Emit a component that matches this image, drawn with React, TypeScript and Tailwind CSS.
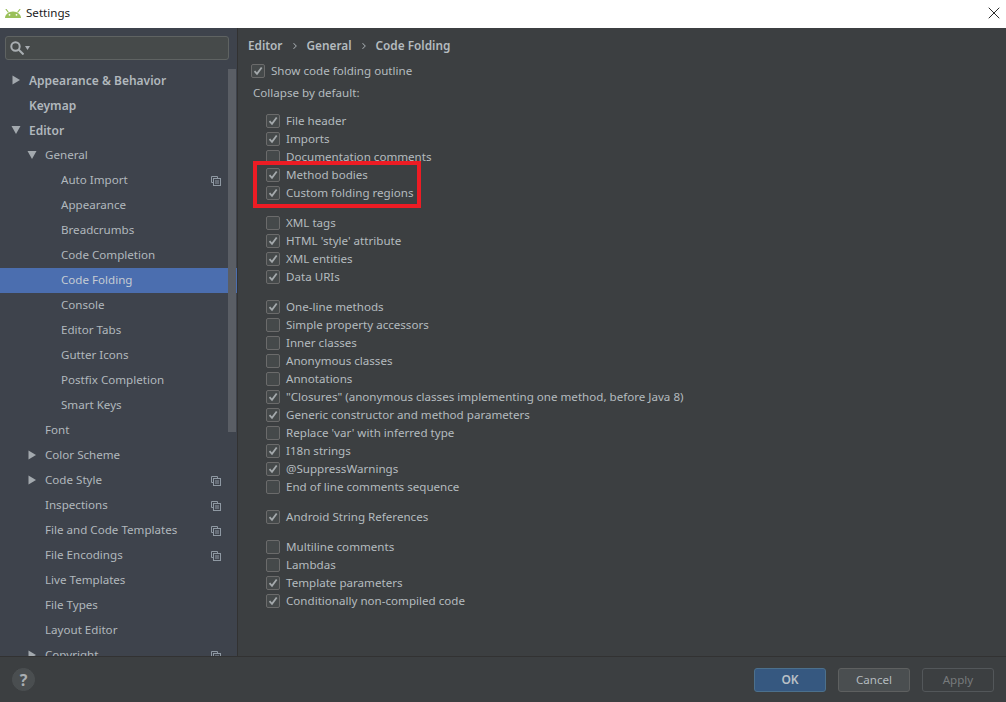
import React from 'react';
import { ChevronRight, X } from 'lucide-react';

const font = "font-['Noto_Sans','Open_Sans',sans-serif]";

interface TreeItem {
  label: string;
  depth: number;
  arrow?: 'right' | 'down';
  bold?: boolean;
  copy?: boolean;
  selected?: boolean;
}

const tree: TreeItem[] = [
  { label: 'Appearance & Behavior', depth: 0, arrow: 'right', bold: true },
  { label: 'Keymap', depth: 0, bold: true },
  { label: 'Editor', depth: 0, arrow: 'down', bold: true },
  { label: 'General', depth: 1, arrow: 'down' },
  { label: 'Auto Import', depth: 2, copy: true },
  { label: 'Appearance', depth: 2 },
  { label: 'Breadcrumbs', depth: 2 },
  { label: 'Code Completion', depth: 2 },
  { label: 'Code Folding', depth: 2, selected: true },
  { label: 'Console', depth: 2 },
  { label: 'Editor Tabs', depth: 2 },
  { label: 'Gutter Icons', depth: 2 },
  { label: 'Postfix Completion', depth: 2 },
  { label: 'Smart Keys', depth: 2 },
  { label: 'Font', depth: 1 },
  { label: 'Color Scheme', depth: 1, arrow: 'right' },
  { label: 'Code Style', depth: 1, arrow: 'right', copy: true },
  { label: 'Inspections', depth: 1, copy: true },
  { label: 'File and Code Templates', depth: 1, copy: true },
  { label: 'File Encodings', depth: 1, copy: true },
  { label: 'Live Templates', depth: 1 },
  { label: 'File Types', depth: 1 },
  { label: 'Layout Editor', depth: 1 },
  { label: 'Copyright', depth: 1, arrow: 'right', copy: true },
];

const groups: [string, boolean][][] = [
  [
    ['File header', true],
    ['Imports', true],
    ['Documentation comments', false],
    ['Method bodies', true],
    ['Custom folding regions', true],
  ],
  [
    ['XML tags', false],
    ["HTML 'style' attribute", true],
    ['XML entities', true],
    ['Data URIs', true],
  ],
  [
    ['One-line methods', true],
    ['Simple property accessors', false],
    ['Inner classes', false],
    ['Anonymous classes', false],
    ['Annotations', false],
    ['"Closures" (anonymous classes implementing one method, before Java 8)', true],
    ['Generic constructor and method parameters', true],
    ["Replace 'var' with inferred type", false],
    ['I18n strings', true],
    ['@SuppressWarnings', true],
    ['End of line comments sequence', false],
  ],
  [['Android String References', true]],
  [
    ['Multiline comments', false],
    ['Lambdas', false],
    ['Template parameters', true],
    ['Conditionally non-compiled code', true],
  ],
];

const AndroidLogo = () => (
  <svg width="16" height="9" viewBox="0 0 16 9">
    <path d="M0 9C0 5.500 3.500 2.500 8 2.500s8 3 8 6.500z" fill="#9ac05a" />
    <path d="M0.800 0 3.500 3.500M15.200 0 12.500 3.500" stroke="#9ac05a" strokeWidth="1.200" />
    <circle cx="4.500" cy="5.800" r="0.900" fill="#fff" />
    <circle cx="11.500" cy="5.800" r="0.900" fill="#fff" />
  </svg>
);

const CopyIcon = () => (
  <svg width="10" height="10" viewBox="0 0 10 10" fill="none" stroke="#8f99a3" strokeWidth="1">
    <path d="M6.500 2.500V0.500H0.500V6.500H2.500" />
    <rect x="2.500" y="2.500" width="7" height="7" />
    <path d="M4 5h4M4 7h4" />
  </svg>
);

const Arrow = ({ dir }: { dir: 'right' | 'down' }) => (
  <svg width="10" height="10" viewBox="0 0 10 10" fill="#a3a9ae">
    {dir === 'right' ? <path d="M1.500 0.500 9 5 1.500 9.500z" /> : <path d="M0.500 1 9.500 1 5 9z" />}
  </svg>
);

const Checkbox = ({ checked }: { checked: boolean }) => (
  <span className="flex h-[14px] w-[14px] shrink-0 items-center justify-center rounded-[2px] border border-[#6b6b6b] bg-[#45494a]">
    {checked && (
      <svg width="10" height="10" viewBox="0 0 10 10" fill="none" stroke="#a4a9ac" strokeWidth="1.800">
        <path d="M1.500 5.200 4 7.800 8.700 1.500" />
      </svg>
    )}
  </span>
);

const CheckRow = ({ label, checked }: { label: string; checked: boolean }) => (
  <div className="flex h-[18px] items-center gap-[6px] whitespace-nowrap text-[11.6px] text-[#b4bbbf]">
    <Checkbox checked={checked} />
    <span>{label}</span>
  </div>
);

const TreeRow = ({ item }: { item: TreeItem }) => {
  const indent = ['pl-[29px]', 'pl-[45px]', 'pl-[61px]'][item.depth];
  const arrowPos = ['left-[11px]', 'left-[27px]', 'left-[43px]'][item.depth];
  return (
    <div
      className={`relative flex h-[25px] shrink-0 items-center pr-[16px] ${indent} ${
        item.selected ? 'bg-[#4b6eaf] text-[#c5ccd3]' : 'text-[#b1b8bd]'
      } ${item.bold ? 'text-[12px] font-semibold' : 'text-[11.6px]'}`}
    >
      {item.arrow && (
        <span className={`absolute top-[7px] ${arrowPos}`}>
          <Arrow dir={item.arrow} />
        </span>
      )}
      <span className={`flex-1 whitespace-nowrap ${item.bold ? '' : 'pb-[2px]'}`}>{item.label}</span>
      {item.copy && <CopyIcon />}
    </div>
  );
};

const Sidebar = () => (
  <aside className="relative flex w-[238px] shrink-0 flex-col overflow-hidden border-r border-[#323232] bg-[#3e434c]">
    <div className="px-[5px] pt-[8px] pb-[8px]">
      <div className="flex h-[24px] w-[224px] items-center gap-[1px] rounded-[3px] border border-[#5f6362] bg-[#464a4a] pl-[4px]">
        <svg width="14" height="14" viewBox="0 0 14 14" fill="none" stroke="#a9aeb2" strokeWidth="2">
          <circle cx="5.500" cy="5.500" r="4.200" />
          <path d="M8.500 8.500 13.500 13.500" />
        </svg>
        <svg width="5" height="4" viewBox="0 0 5 4" fill="#a9aeb2">
          <path d="M0 0h5L2.500 4z" />
        </svg>
      </div>
    </div>
    <div className="flex min-h-0 flex-1 flex-col overflow-hidden">
      {tree.map((item) => (
        <TreeRow key={item.label + item.depth} item={item} />
      ))}
    </div>
    <div className="absolute top-[41px] right-[1px] h-[363px] w-[8px] bg-[#5a5e65]" />
  </aside>
);

const Content = () => (
  <main className="relative min-w-0 flex-1 bg-[#3c3f41] pt-[9px] pl-[10px]">
    <div className="flex h-[18px] items-center text-[11.8px] font-semibold text-[#b4bbbf]">
      <span>Editor</span>
      <ChevronRight size={10} strokeWidth={2.5} className="mx-[7px] text-[#a0a6aa]" />
      <span>General</span>
      <ChevronRight size={10} strokeWidth={2.5} className="mx-[7px] text-[#a0a6aa]" />
      <span>Code Folding</span>
    </div>
    <div className="mt-[7px] pl-[3px]">
      <div className="flex h-[18px] items-center gap-[6px] text-[11.6px] text-[#b4bbbf]">
        <Checkbox checked />
        <span>Show code folding outline</span>
      </div>
    </div>
    <div className="mt-[4px] flex h-[18px] items-center pl-[5px] text-[11.6px] text-[#b4bbbf]">Collapse by default:</div>
    <div className="mt-[10px] flex flex-col gap-[12px] pl-[18px]">
      {groups.map((rows, i) => (
        <div key={i} className="flex flex-col">
          {rows.map(([label, checked]) => (
            <CheckRow key={label} label={label} checked={checked} />
          ))}
        </div>
      ))}
    </div>
    {/* red highlight over the screenshot */}
    <div className="absolute top-[133px] left-[15px] h-[47px] w-[168px] border-[4px] border-[#ed1c24]" />
  </main>
);

const Footer = () => (
  <footer className="flex h-[46px] shrink-0 items-center justify-between border-t border-[#323232] bg-[#3c3f41] pr-[12px] pl-[12px]">
    <div className="flex h-[23px] w-[23px] items-center justify-center rounded-full border border-[#4c5052] bg-[#4a4e50] text-[16px] font-bold text-[#a9aeb2]">
      ?
    </div>
    <div className="flex gap-[12px] text-[11.6px]">
      <button className="h-[24px] w-[72px] rounded-[3px] border border-[#4c708c] bg-[#365880] text-[12px] font-semibold text-[#b9c0c6]">
        OK
      </button>
      <button className="h-[24px] w-[72px] rounded-[3px] border border-[#5e6060] bg-[#4a4e50] text-[#b4bbbf]">
        Cancel
      </button>
      <button className="h-[24px] w-[72px] rounded-[3px] border border-[#53575a] bg-[#3c3f41] text-[#777a7c]">
        Apply
      </button>
    </div>
  </footer>
);

export default function App() {
  return (
    <div className={`flex h-[702px] w-[1006px] flex-col overflow-hidden bg-[#3c3f41] ${font}`}>
      <header className="flex h-[28px] shrink-0 items-center bg-white pr-[2px] pb-[2px] pl-[5px] text-[11.6px] text-[#1a1a1a]">
        <AndroidLogo />
        <span className="ml-[5px] flex-1">Settings</span>
        <X size={20} strokeWidth={1} className="text-black" />
      </header>
      <div className="flex min-h-0 flex-1">
        <Sidebar />
        <Content />
      </div>
      <Footer />
    </div>
  );
}
